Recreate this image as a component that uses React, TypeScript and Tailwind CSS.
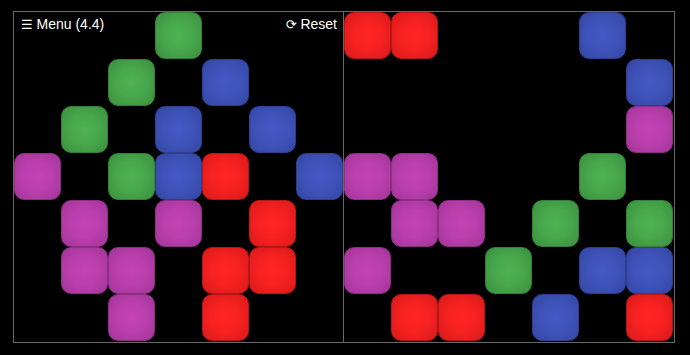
import React from "react";

type C = "g" | "r" | "b" | "p";

const colClass = ["col-start-1", "col-start-2", "col-start-3", "col-start-4", "col-start-5", "col-start-6", "col-start-7"];
const rowClass = ["row-start-1", "row-start-2", "row-start-3", "row-start-4", "row-start-5", "row-start-6", "row-start-7"];

const colorClass: Record<C, string> = {
  g: "bg-[radial-gradient(circle,#4db351_0%,#48a84c_45%,#3b8f3f_100%)] border-[#338036]",
  r: "bg-[radial-gradient(circle,#ff2424_0%,#f72121_45%,#d61a1a_100%)] border-[#b81616]",
  b: "bg-[radial-gradient(circle,#4459c6_0%,#3f53ba_45%,#3446a3_100%)] border-[#2e3e91]",
  p: "bg-[radial-gradient(circle,#c443b5_0%,#bb3fae_45%,#a13597_100%)] border-[#8e2f86]",
};

const left: [number, number, C][] = [
  [3, 0, "g"],
  [2, 1, "g"], [4, 1, "b"],
  [1, 2, "g"], [3, 2, "b"], [5, 2, "b"],
  [0, 3, "p"], [2, 3, "g"], [3, 3, "b"], [4, 3, "r"], [6, 3, "b"],
  [1, 4, "p"], [3, 4, "p"], [5, 4, "r"],
  [1, 5, "p"], [2, 5, "p"], [4, 5, "r"], [5, 5, "r"],
  [2, 6, "p"], [4, 6, "r"],
];

const right: [number, number, C][] = [
  [0, 0, "r"], [1, 0, "r"], [5, 0, "b"],
  [6, 1, "b"],
  [6, 2, "p"],
  [0, 3, "p"], [1, 3, "p"], [5, 3, "g"],
  [1, 4, "p"], [2, 4, "p"], [4, 4, "g"], [6, 4, "g"],
  [0, 5, "p"], [3, 5, "g"], [5, 5, "b"], [6, 5, "b"],
  [1, 6, "r"], [2, 6, "r"], [4, 6, "b"], [6, 6, "r"],
];

function Board({ tiles, children, extra }: { tiles: [number, number, C][]; children?: React.ReactNode; extra: string }) {
  return (
    <div className={"relative border-[#686868] " + extra}>
      <div className="grid grid-cols-[repeat(7,47px)] grid-rows-[repeat(7,47px)]">
        {tiles.map(([c, r, k], i) => (
          <div
            key={i}
            className={`${colClass[c]} ${rowClass[r]} rounded-[10px] border ${colorClass[k]}`}
          />
        ))}
      </div>
      {children}
    </div>
  );
}

export default function App() {
  return (
    <div
      className="w-[690px] h-[355px] bg-black flex justify-start pl-[13px] pt-[11px] text-white"
      style={{ fontFamily: '"Liberation Sans", "DejaVu Sans", Arial, sans-serif' }}
    >
      <div className="flex h-[332px]">
        <Board tiles={left} extra="border w-[331px] h-[332px]">
          <div className="absolute top-[3px] left-[7px] right-[6px] flex justify-between text-[14px] leading-[18px]">
            <span>
              <span style={{ fontFamily: '"DejaVu Sans", sans-serif' }} className="text-[13px]">☰</span> Menu (4.4)
            </span>
            <span>
              <span style={{ fontFamily: '"DejaVu Sans", sans-serif' }} className="text-[13px]">⟳</span> Reset
            </span>
          </div>
        </Board>
        <Board tiles={right} extra="border border-l-0 w-[331px] h-[332px]" />
      </div>
    </div>
  );
}
